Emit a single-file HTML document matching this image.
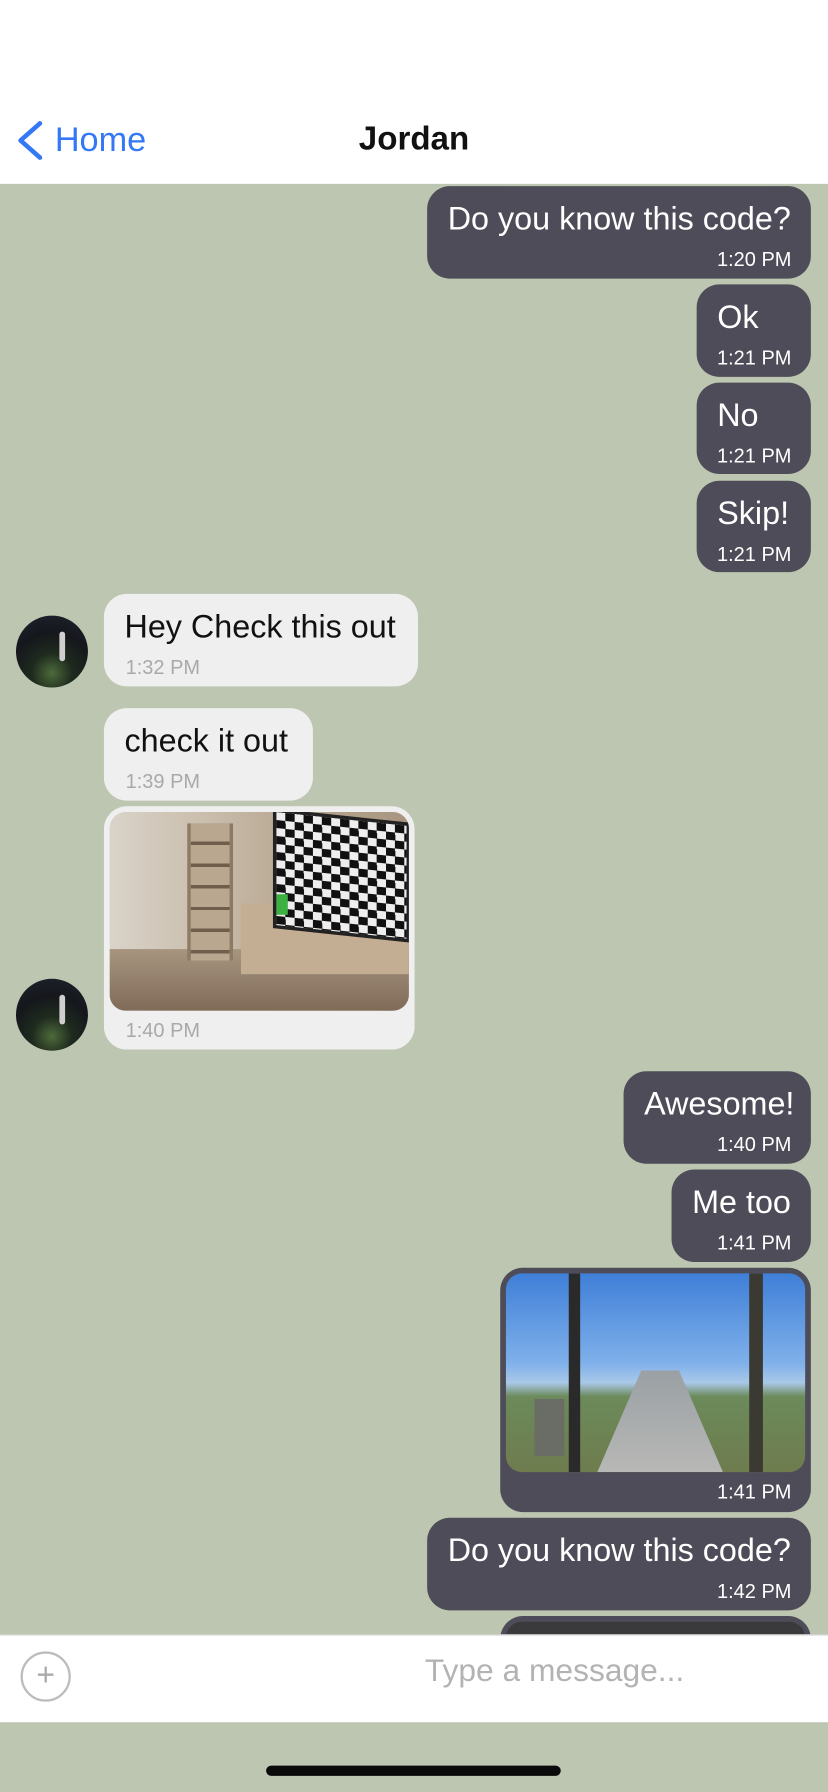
<!DOCTYPE html>
<html><head><meta charset="utf-8"><style>
*{margin:0;padding:0;box-sizing:border-box}
html,body{width:828px;height:1792px;overflow:hidden;background:#bcc6b0;font-family:"Liberation Sans",sans-serif}
#w{position:absolute;left:0;top:0;width:725px;height:1569px;transform:scale(1.14207);transform-origin:0 0}
.a{position:absolute}
.o{position:absolute;background:#4e4c58;border-radius:20px;color:#fff}
.i{position:absolute;background:#efefef;border-radius:20px;color:#111}
.t{position:absolute;font-size:28.3px;white-space:nowrap}
.tm{position:absolute;font-size:17.5px;white-space:nowrap}
.o .tm{right:17px;color:#fff}
.i .tm{left:19px;color:#a9a9a9}
.av{position:absolute;left:14px;width:63px;height:63px;border-radius:50%;background:radial-gradient(circle at 50% 80%,#4d6a3a 0,#1e2a1e 30%,#15171c 60%,#202430 100%);overflow:hidden}
.av:after{content:"";position:absolute;left:38px;top:14px;width:5px;height:26px;background:#cfcfcf;border-radius:3px}
</style></head><body><div id="w">
<div class="a" style="left:0;top:0;width:725px;height:161px;background:#fff"></div>
<svg class="a" style="left:12px;top:104px" width="30" height="38" viewBox="0 0 30 38"><path d="M23 4 L6 19 L23 34" fill="none" stroke="#3478f6" stroke-width="4" stroke-linecap="round" stroke-linejoin="round"/></svg>
<div class="a" style="left:48px;top:106px;font-size:30px;color:#3478f6">Home</div>
<div class="a" style="left:0;width:725px;text-align:center;top:106px;font-size:29px;font-weight:bold;color:#111">Jordan</div>

<div class="o" style="left:374px;top:163px;width:336px;height:81px"><div class="t" style="left:18px;top:12px">Do you know this code?</div><div class="tm" style="top:54px">1:20 PM</div></div>
<div class="o" style="left:610px;top:249px;width:100px;height:81px"><div class="t" style="left:18px;top:12px">Ok</div><div class="tm" style="top:54px">1:21 PM</div></div>
<div class="o" style="left:610px;top:335px;width:100px;height:80px"><div class="t" style="left:18px;top:12px">No</div><div class="tm" style="top:54px">1:21 PM</div></div>
<div class="o" style="left:610px;top:421px;width:100px;height:80px"><div class="t" style="left:18px;top:12px">Skip!</div><div class="tm" style="top:54px">1:21 PM</div></div>

<div class="av" style="top:539px"></div>
<div class="i" style="left:91px;top:520px;width:275px;height:81px"><div class="t" style="left:18px;top:12px">Hey Check this out</div><div class="tm" style="top:54px">1:32 PM</div></div>
<div class="i" style="left:91px;top:620px;width:183px;height:81px"><div class="t" style="left:18px;top:12px">check it out</div><div class="tm" style="top:54px">1:39 PM</div></div>
<div class="i" style="left:91px;top:706px;width:272px;height:213px">
 <div class="a" style="left:5px;top:5px;width:262px;height:174px;border-radius:14px;overflow:hidden;background:linear-gradient(90deg,#d9d3c9 0,#cbbfae 30%,#b8a893 60%,#a89580 100%)">
  <div class="a" style="left:0;top:120px;width:262px;height:54px;background:linear-gradient(#a89580,#7f6b58)"></div>
  <div class="a" style="left:68px;top:10px;width:40px;height:120px;border-left:3px solid #8c7a62;border-right:3px solid #8c7a62;background:repeating-linear-gradient(#b9a88f 0 16px,#6f5e4c 16px 19px)"></div>
  <div class="a" style="left:115px;top:80px;width:147px;height:62px;background:#c4ae93"></div>
  <div class="a" style="left:143px;top:3px;width:120px;height:105px;background:repeating-conic-gradient(#111 0 25%,#eee 0 50%) 0 0/16px 14px;border:3px solid #222;transform:skewY(6deg)"></div>
  <div class="a" style="left:146px;top:72px;width:10px;height:18px;background:#3cb043"></div>
 </div>
 <div class="tm" style="top:186px">1:40 PM</div></div>
<div class="av" style="top:857px"></div>

<div class="o" style="left:546px;top:938px;width:164px;height:81px"><div class="t" style="left:18px;top:12px">Awesome!</div><div class="tm" style="top:54px">1:40 PM</div></div>
<div class="o" style="left:588px;top:1024px;width:122px;height:81px"><div class="t" style="left:18px;top:12px">Me too</div><div class="tm" style="top:54px">1:41 PM</div></div>
<div class="o" style="left:438px;top:1110px;width:272px;height:214px">
 <div class="a" style="left:5px;top:5px;width:262px;height:174px;border-radius:14px;overflow:hidden;background:linear-gradient(#3f7fd8 0,#7fb0ea 45%,#a9c8e8 55%,#6c8a5a 62%,#6e7c4e 100%)">
  <div class="a" style="left:80px;top:85px;width:110px;height:89px;background:linear-gradient(#9aa0a4,#b8b8b6);clip-path:polygon(35% 0,65% 0,100% 100%,0 100%)"></div>
  <div class="a" style="left:55px;top:0;width:10px;height:174px;background:#2a2a2a"></div>
  <div class="a" style="left:213px;top:0;width:12px;height:174px;background:#3a3a32"></div>
  <div class="a" style="left:25px;top:110px;width:26px;height:50px;background:#6a6c66"></div>
 </div>
 <div class="tm" style="top:186px">1:41 PM</div></div>
<div class="o" style="left:374px;top:1329px;width:336px;height:81px"><div class="t" style="left:18px;top:12px">Do you know this code?</div><div class="tm" style="top:54px">1:42 PM</div></div>
<div class="o" style="left:438px;top:1415px;width:272px;height:60px"><div class="a" style="left:5px;top:5px;width:262px;height:60px;border-radius:14px;background:#3a3a3c"></div></div>

<div class="a" style="left:0;top:1431px;width:725px;height:77px;background:#fff;border-top:1px solid #ccc"></div>
<div class="a" style="left:18px;top:1446px;width:44px;height:44px;border:2.5px solid #bcbcbc;border-radius:50%;color:#aaa;font-size:28px;line-height:38px;text-align:center">+</div>
<div class="a" style="left:372px;top:1447px;font-size:27.8px;color:#b3b3b3">Type a message...</div>
<div class="a" style="left:233px;top:1546px;width:258px;height:9px;border-radius:5px;background:#0a0a0a"></div>
</div></body></html>
